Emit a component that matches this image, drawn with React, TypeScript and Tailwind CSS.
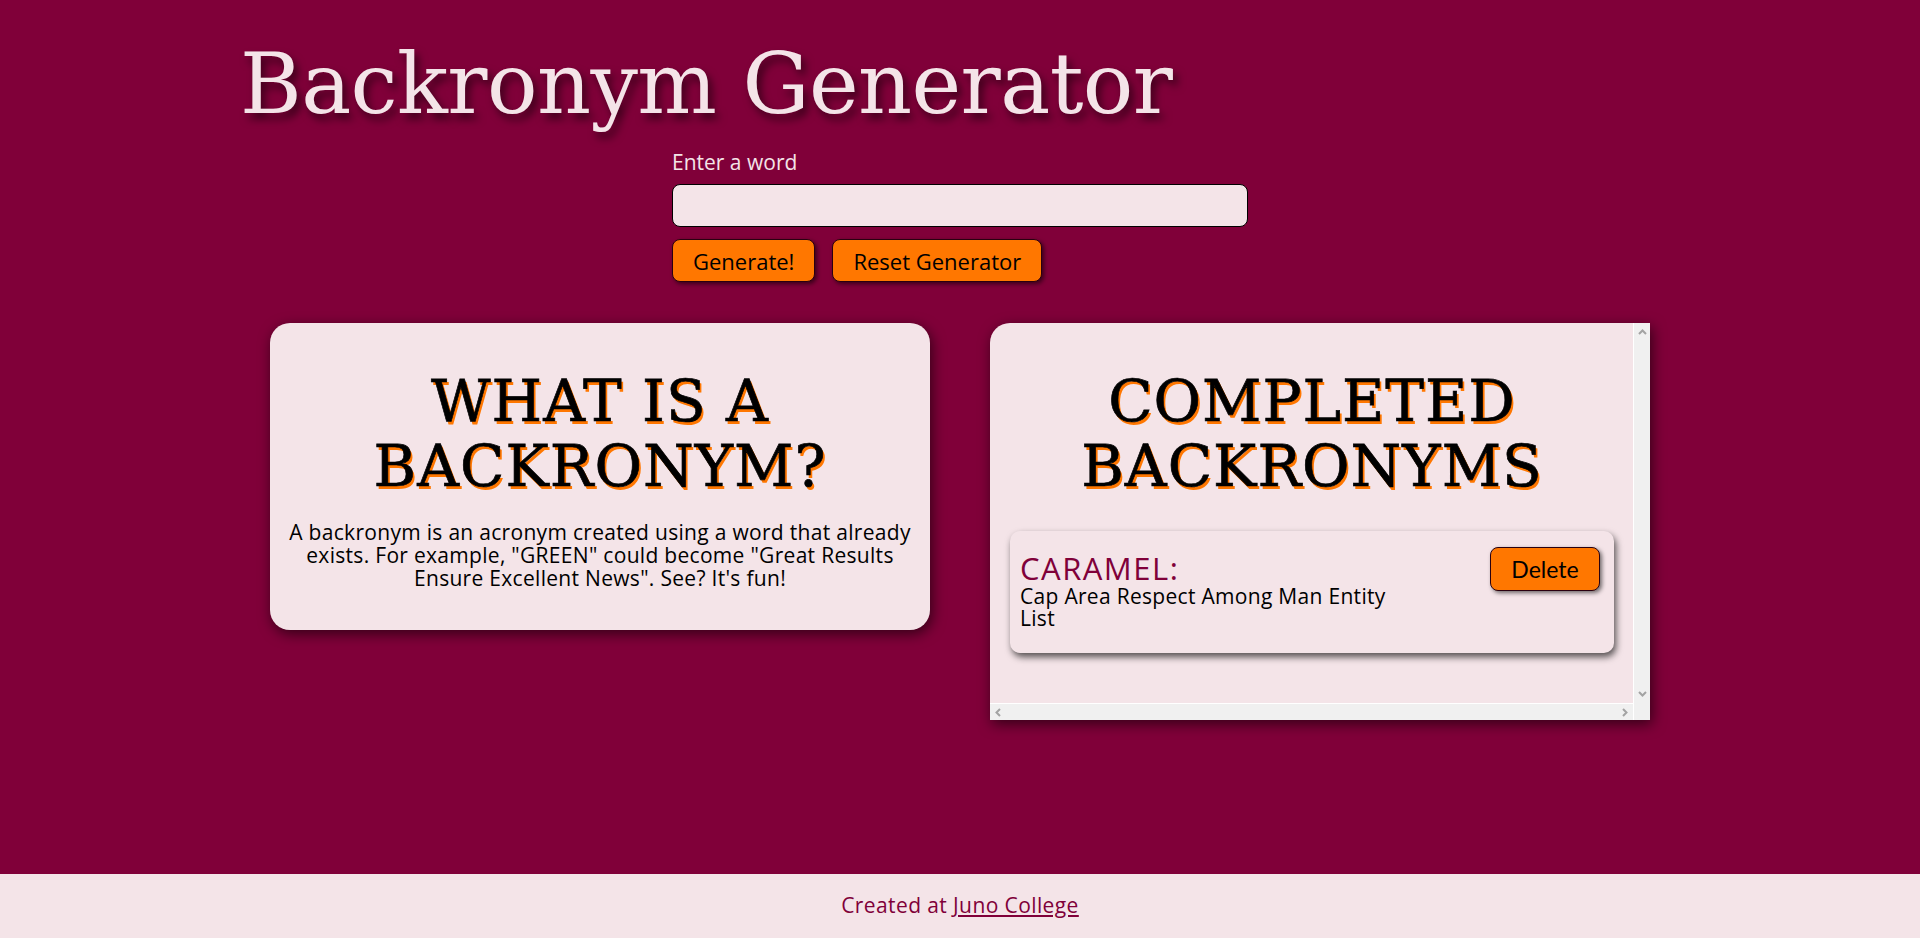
import React from "react";

function ArrowUp() {
  return (
    <svg width="9" height="6" viewBox="0 0 9 6" className="block">
      <polyline points="1,5 4.5,1.5 8,5" fill="none" stroke="#a3a3a3" strokeWidth="2" />
    </svg>
  );
}
function ArrowDown() {
  return (
    <svg width="9" height="6" viewBox="0 0 9 6" className="block">
      <polyline points="1,1 4.5,4.5 8,1" fill="none" stroke="#a3a3a3" strokeWidth="2" />
    </svg>
  );
}
function ArrowLeft() {
  return (
    <svg width="6" height="9" viewBox="0 0 6 9" className="block">
      <polyline points="5,1 1.5,4.5 5,8" fill="none" stroke="#a3a3a3" strokeWidth="2" />
    </svg>
  );
}
function ArrowRight() {
  return (
    <svg width="6" height="9" viewBox="0 0 6 9" className="block">
      <polyline points="1,1 4.5,4.5 1,8" fill="none" stroke="#a3a3a3" strokeWidth="2" />
    </svg>
  );
}

export default function App() {
  return (
    <div className="min-h-screen flex flex-col bg-[#800039] font-['Open_Sans',sans-serif]">
      <main className="flex-1">
        <header className="w-[1440px] mx-auto pt-[42px]">
          <h1 className="font-['DejaVu_Serif',serif] text-[84px] leading-[84px] tracking-[-0.6px] text-[#f4e4e8] [text-shadow:4px_6px_8px_rgba(0,0,0,0.55)]">
            Backronym Generator
          </h1>
        </header>

        <form className="w-[576px] mx-auto mt-[24px] flex flex-col">
          <label className="text-[21px] leading-[24px] text-[#f4e4e8]">Enter a word</label>
          <input
            type="text"
            className="mt-[10px] h-[43px] w-full rounded-[8px] border border-black bg-[#f4e4e8] px-3 text-[20px] outline-none"
          />
          <div className="mt-[12px] flex gap-[17px]">
            <button
              type="button"
              className="h-[43px] px-[20px] rounded-[8px] border border-[#2a0010] bg-[#ff7700] text-[22px] leading-none text-black shadow-[2px_2px_4px_rgba(0,0,0,0.55)]"
            >
              Generate!
            </button>
            <button
              type="button"
              className="h-[43px] px-[20px] rounded-[8px] border border-[#2a0010] bg-[#ff7700] text-[22px] leading-none text-black shadow-[2px_2px_4px_rgba(0,0,0,0.55)]"
            >
              Reset Generator
            </button>
          </div>
        </form>

        <section className="mt-[41px] flex justify-center items-start gap-[60px]">
          <div className="w-[660px] rounded-[20px] bg-[#f4e4e8] pt-[46px] pb-[40px] px-[10px] text-center shadow-[2px_4px_14px_rgba(0,0,0,0.6)]">
            <h2 className="font-['DejaVu_Serif',serif] text-[58px] leading-[65px] tracking-[1px] text-black [-webkit-text-stroke:0.7px_black] [text-shadow:2px_3px_0_#ff7700]">
              WHAT IS A<br />BACKRONYM?
            </h2>
            <p className="mt-[22px] text-[21px] leading-[23px] tracking-[0.3px] text-black">
              A backronym is an acronym created using a word that already<br />
              exists. For example, "GREEN" could become "Great Results<br />
              Ensure Excellent News". See? It's fun!
            </p>
          </div>

          <div className="w-[660px] h-[397px] flex flex-col rounded-tl-[20px] shadow-[2px_4px_14px_rgba(0,0,0,0.6)]">
            <div className="flex flex-1 min-h-0">
              <div className="flex-1 bg-[#f4e4e8] rounded-tl-[20px] pt-[46px] pl-[20px] pr-[19px]">
                <h2 className="text-center font-['DejaVu_Serif',serif] text-[58px] leading-[65px] tracking-[1px] text-black [-webkit-text-stroke:0.7px_black] [text-shadow:2px_3px_0_#ff7700]">
                  COMPLETED<br />BACKRONYMS
                </h2>
                <ul className="mt-[32px]">
                  <li className="flex justify-between items-start rounded-[10px] bg-[#f4e4e8] pt-[16px] pb-[24px] pl-[10px] pr-[14px] shadow-[2px_4px_7px_rgba(0,0,0,0.65)]">
                    <div className="mt-[4px]">
                      <h3 className="text-[31px] leading-[34px] tracking-[1.5px] text-[#800039]">CARAMEL:</h3>
                      <p className="text-[21px] leading-[22px] tracking-[0.3px] text-black">
                        Cap Area Respect Among Man Entity<br />List
                      </p>
                    </div>
                    <button
                      type="button"
                      className="h-[44px] w-[110px] rounded-[8px] border border-[#2a0010] bg-[#ff7700] font-['Lato',sans-serif] text-[23px] leading-none text-black shadow-[2px_2px_4px_rgba(0,0,0,0.55)]"
                    >
                      Delete
                    </button>
                  </li>
                </ul>
              </div>
              <div className="w-[17px] border-l border-white bg-[#f0f0f0] flex flex-col items-center justify-between py-[6px]">
                <ArrowUp />
                <ArrowDown />
              </div>
            </div>
            <div className="flex h-[17px]">
              <div className="flex-1 border-t border-white bg-[#f0f0f0] flex items-center justify-between px-[5px]">
                <ArrowLeft />
                <ArrowRight />
              </div>
              <div className="w-[17px] border-l border-white bg-[#f0f0f0]" />
            </div>
          </div>
        </section>
      </main>

      <footer className="h-[64px] bg-[#f4e4e8] flex items-center justify-center text-[21px] tracking-[0.4px] text-[#800039]">
        <p>
          Created at <a href="#" className="underline">Juno College</a>
        </p>
      </footer>
    </div>
  );
}
